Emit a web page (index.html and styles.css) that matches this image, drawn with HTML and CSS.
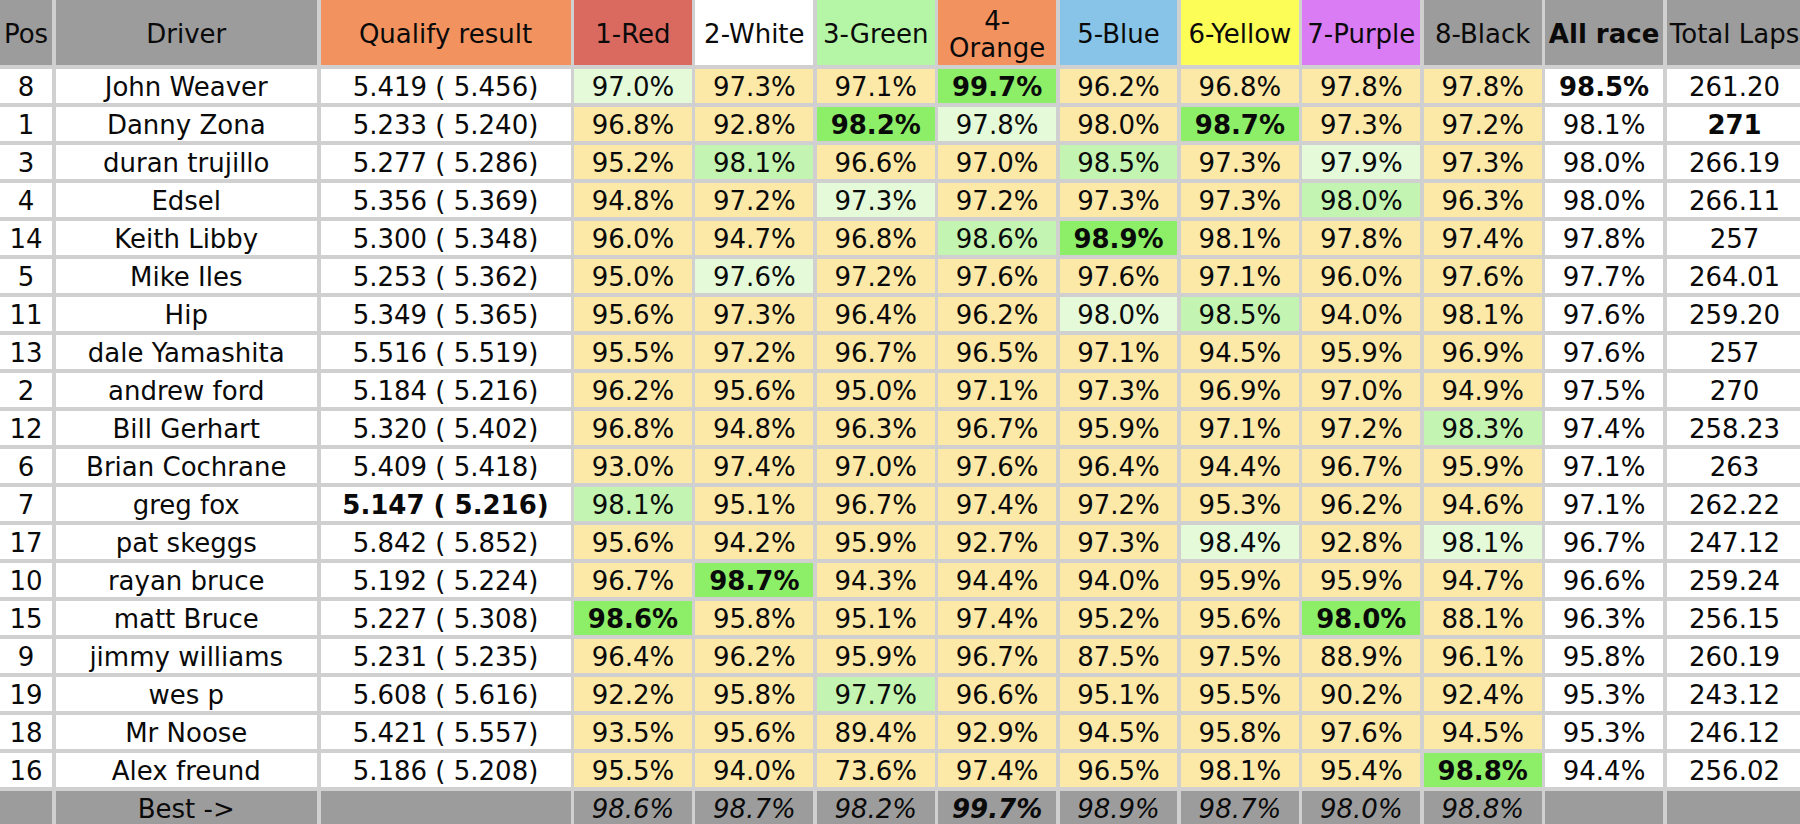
FILE: index.html
```html
<!DOCTYPE html>
<html>
<head>
<meta charset="utf-8">
<title>Race results</title>
<link rel="stylesheet" href="styles.css">
</head>
<body>
<div class="board">
  <div class="c h grey">Pos</div>
  <div class="c h grey">Driver</div>
  <div class="c h orange">Qualify result</div>
  <div class="c h red">1-Red</div>
  <div class="c h white">2-White</div>
  <div class="c h green">3-Green</div>
  <div class="c h orange">4-<br>Orange</div>
  <div class="c h blue">5-Blue</div>
  <div class="c h yellow">6-Yellow</div>
  <div class="c h purple">7-Purple</div>
  <div class="c h grey">8-Black</div>
  <div class="c h grey bold">All race</div>
  <div class="c h grey">Total Laps</div>

  <div class="c">8</div><div class="c">John Weaver</div><div class="c">5.419 ( 5.456)</div>
  <div class="c l">97.0%</div><div class="c y">97.3%</div><div class="c y">97.1%</div><div class="c b">99.7%</div><div class="c y">96.2%</div><div class="c y">96.8%</div><div class="c y">97.8%</div><div class="c y">97.8%</div>
  <div class="c bold">98.5%</div><div class="c">261.20</div>

  <div class="c">1</div><div class="c">Danny Zona</div><div class="c">5.233 ( 5.240)</div>
  <div class="c y">96.8%</div><div class="c y">92.8%</div><div class="c b">98.2%</div><div class="c l">97.8%</div><div class="c y">98.0%</div><div class="c b">98.7%</div><div class="c y">97.3%</div><div class="c y">97.2%</div>
  <div class="c">98.1%</div><div class="c bold">271</div>

  <div class="c">3</div><div class="c">duran trujillo</div><div class="c">5.277 ( 5.286)</div>
  <div class="c y">95.2%</div><div class="c m">98.1%</div><div class="c y">96.6%</div><div class="c y">97.0%</div><div class="c m">98.5%</div><div class="c y">97.3%</div><div class="c l">97.9%</div><div class="c y">97.3%</div>
  <div class="c">98.0%</div><div class="c">266.19</div>

  <div class="c">4</div><div class="c">Edsel</div><div class="c">5.356 ( 5.369)</div>
  <div class="c y">94.8%</div><div class="c y">97.2%</div><div class="c l">97.3%</div><div class="c y">97.2%</div><div class="c y">97.3%</div><div class="c y">97.3%</div><div class="c m">98.0%</div><div class="c y">96.3%</div>
  <div class="c">98.0%</div><div class="c">266.11</div>

  <div class="c">14</div><div class="c">Keith Libby</div><div class="c">5.300 ( 5.348)</div>
  <div class="c y">96.0%</div><div class="c y">94.7%</div><div class="c y">96.8%</div><div class="c m">98.6%</div><div class="c b">98.9%</div><div class="c y">98.1%</div><div class="c y">97.8%</div><div class="c y">97.4%</div>
  <div class="c">97.8%</div><div class="c">257</div>

  <div class="c">5</div><div class="c">Mike Iles</div><div class="c">5.253 ( 5.362)</div>
  <div class="c y">95.0%</div><div class="c l">97.6%</div><div class="c y">97.2%</div><div class="c y">97.6%</div><div class="c y">97.6%</div><div class="c y">97.1%</div><div class="c y">96.0%</div><div class="c y">97.6%</div>
  <div class="c">97.7%</div><div class="c">264.01</div>

  <div class="c">11</div><div class="c">Hip</div><div class="c">5.349 ( 5.365)</div>
  <div class="c y">95.6%</div><div class="c y">97.3%</div><div class="c y">96.4%</div><div class="c y">96.2%</div><div class="c l">98.0%</div><div class="c m">98.5%</div><div class="c y">94.0%</div><div class="c y">98.1%</div>
  <div class="c">97.6%</div><div class="c">259.20</div>

  <div class="c">13</div><div class="c">dale Yamashita</div><div class="c">5.516 ( 5.519)</div>
  <div class="c y">95.5%</div><div class="c y">97.2%</div><div class="c y">96.7%</div><div class="c y">96.5%</div><div class="c y">97.1%</div><div class="c y">94.5%</div><div class="c y">95.9%</div><div class="c y">96.9%</div>
  <div class="c">97.6%</div><div class="c">257</div>

  <div class="c">2</div><div class="c">andrew ford</div><div class="c">5.184 ( 5.216)</div>
  <div class="c y">96.2%</div><div class="c y">95.6%</div><div class="c y">95.0%</div><div class="c y">97.1%</div><div class="c y">97.3%</div><div class="c y">96.9%</div><div class="c y">97.0%</div><div class="c y">94.9%</div>
  <div class="c">97.5%</div><div class="c">270</div>

  <div class="c">12</div><div class="c">Bill Gerhart</div><div class="c">5.320 ( 5.402)</div>
  <div class="c y">96.8%</div><div class="c y">94.8%</div><div class="c y">96.3%</div><div class="c y">96.7%</div><div class="c y">95.9%</div><div class="c y">97.1%</div><div class="c y">97.2%</div><div class="c m">98.3%</div>
  <div class="c">97.4%</div><div class="c">258.23</div>

  <div class="c">6</div><div class="c">Brian Cochrane</div><div class="c">5.409 ( 5.418)</div>
  <div class="c y">93.0%</div><div class="c y">97.4%</div><div class="c y">97.0%</div><div class="c y">97.6%</div><div class="c y">96.4%</div><div class="c y">94.4%</div><div class="c y">96.7%</div><div class="c y">95.9%</div>
  <div class="c">97.1%</div><div class="c">263</div>

  <div class="c">7</div><div class="c">greg fox</div><div class="c bold">5.147 ( 5.216)</div>
  <div class="c m">98.1%</div><div class="c y">95.1%</div><div class="c y">96.7%</div><div class="c y">97.4%</div><div class="c y">97.2%</div><div class="c y">95.3%</div><div class="c y">96.2%</div><div class="c y">94.6%</div>
  <div class="c">97.1%</div><div class="c">262.22</div>

  <div class="c">17</div><div class="c">pat skeggs</div><div class="c">5.842 ( 5.852)</div>
  <div class="c y">95.6%</div><div class="c y">94.2%</div><div class="c y">95.9%</div><div class="c y">92.7%</div><div class="c y">97.3%</div><div class="c l">98.4%</div><div class="c y">92.8%</div><div class="c l">98.1%</div>
  <div class="c">96.7%</div><div class="c">247.12</div>

  <div class="c">10</div><div class="c">rayan bruce</div><div class="c">5.192 ( 5.224)</div>
  <div class="c y">96.7%</div><div class="c b">98.7%</div><div class="c y">94.3%</div><div class="c y">94.4%</div><div class="c y">94.0%</div><div class="c y">95.9%</div><div class="c y">95.9%</div><div class="c y">94.7%</div>
  <div class="c">96.6%</div><div class="c">259.24</div>

  <div class="c">15</div><div class="c">matt Bruce</div><div class="c">5.227 ( 5.308)</div>
  <div class="c b">98.6%</div><div class="c y">95.8%</div><div class="c y">95.1%</div><div class="c y">97.4%</div><div class="c y">95.2%</div><div class="c y">95.6%</div><div class="c b">98.0%</div><div class="c y">88.1%</div>
  <div class="c">96.3%</div><div class="c">256.15</div>

  <div class="c">9</div><div class="c">jimmy williams</div><div class="c">5.231 ( 5.235)</div>
  <div class="c y">96.4%</div><div class="c y">96.2%</div><div class="c y">95.9%</div><div class="c y">96.7%</div><div class="c y">87.5%</div><div class="c y">97.5%</div><div class="c y">88.9%</div><div class="c y">96.1%</div>
  <div class="c">95.8%</div><div class="c">260.19</div>

  <div class="c">19</div><div class="c">wes p</div><div class="c">5.608 ( 5.616)</div>
  <div class="c y">92.2%</div><div class="c y">95.8%</div><div class="c m">97.7%</div><div class="c y">96.6%</div><div class="c y">95.1%</div><div class="c y">95.5%</div><div class="c y">90.2%</div><div class="c y">92.4%</div>
  <div class="c">95.3%</div><div class="c">243.12</div>

  <div class="c">18</div><div class="c">Mr Noose</div><div class="c">5.421 ( 5.557)</div>
  <div class="c y">93.5%</div><div class="c y">95.6%</div><div class="c y">89.4%</div><div class="c y">92.9%</div><div class="c y">94.5%</div><div class="c y">95.8%</div><div class="c y">97.6%</div><div class="c y">94.5%</div>
  <div class="c">95.3%</div><div class="c">246.12</div>

  <div class="c">16</div><div class="c">Alex freund</div><div class="c">5.186 ( 5.208)</div>
  <div class="c y">95.5%</div><div class="c y">94.0%</div><div class="c y">73.6%</div><div class="c y">97.4%</div><div class="c y">96.5%</div><div class="c y">98.1%</div><div class="c y">95.4%</div><div class="c b">98.8%</div>
  <div class="c">94.4%</div><div class="c">256.02</div>

  <div class="c grey"></div><div class="c grey">Best -&gt;</div><div class="c grey"></div>
  <div class="c grey it">98.6%</div><div class="c grey it">98.7%</div><div class="c grey it">98.2%</div><div class="c grey it bold">99.7%</div><div class="c grey it">98.9%</div><div class="c grey it">98.7%</div><div class="c grey it">98.0%</div><div class="c grey it">98.8%</div>
  <div class="c grey"></div><div class="c grey"></div>
</div>
</body>
</html>
```
FILE: styles.css
```css
html, body {
  margin: 0;
  padding: 0;
  background: #d0d0d0;
  overflow: hidden;
}

.board {
  display: grid;
  grid-template-columns: 52px 261.5px 250px repeat(9, 117.9px) 136px;
  grid-template-rows: 65px repeat(20, 34.5px);
  gap: 3.5px;
  background: #d0d0d0;
  font-family: "DejaVu Sans", Verdana, sans-serif;
  font-size: 26px;
  color: #0a0a0a;
  width: 1810px;
}

.c {
  box-sizing: border-box;
  display: flex;
  align-items: center;
  justify-content: center;
  text-align: center;
  background: #ffffff;
  padding: 4px 0 0;
  line-height: 27px;
  white-space: nowrap;
  overflow: hidden;
}

.h { white-space: normal; }

.grey { background: #9c9c9c; }
.orange { background: #f2935f; }
.red { background: #da6a5f; }
.white { background: #ffffff; }
.green { background: #b5f6a6; }
.blue { background: #88c4e8; }
.yellow { background: #fdfd57; }
.purple { background: #da7cf3; }

.y { background: #fce9a8; }
.l { background: #e4fad9; }
.m { background: #c3f4b2; }
.b { background: #8dee68; font-weight: bold; }

.bold { font-weight: bold; }
.it { font-style: italic; }
```
